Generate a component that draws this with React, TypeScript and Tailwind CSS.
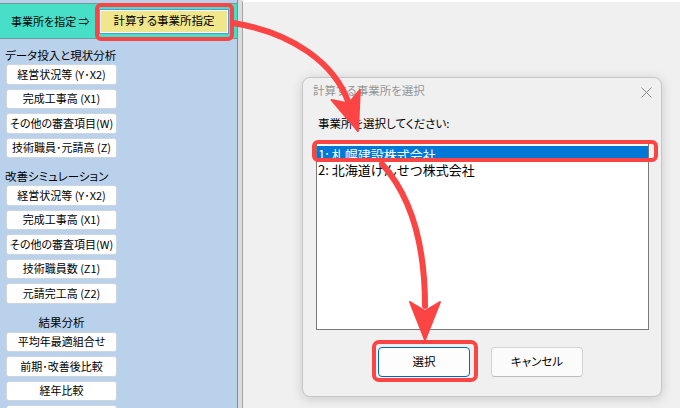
import * as React from "react"

const inputButtons = [
  "経営状況等 (Y･X2)",
  "完成工事高 (X1)",
  "その他の審査項目(W)",
  "技術職員･元請高 (Z)",
]

const simulationButtons = [
  "経営状況等 (Y･X2)",
  "完成工事高 (X1)",
  "その他の審査項目(W)",
  "技術職員数 (Z1)",
  "元請完工高 (Z2)",
]

const resultButtons = ["平均年最適組合せ", "前期･改善後比較", "経年比較", "年度別比較"]

const companies = ["1: 札幌建設株式会社", "2: 北海道けんせつ株式会社"]

const SideButton = ({ label }: { label: string }) => (
  <button className="ml-[6px] flex h-[20.5px] w-[111px] shrink-0 items-center justify-center rounded-[3px] border border-[#cdd5de] bg-white text-[11px] leading-none text-black">
    {label}
  </button>
)

const Sidebar = () => (
  <aside className="flex h-full w-[238px] shrink-0 flex-col border-r border-[#7f8d9c] bg-[#b9d1ea]">
    {/* header */}
    <div className="mt-[3px] flex h-[36px] shrink-0 items-center border-y border-[#6f9a96] bg-[#48dfc9] pl-[11px]">
      <span className="w-[88px] text-[11px] leading-none text-black">事業所を指定&nbsp;⇒</span>
      <button className="flex h-[25px] w-[130px] items-center justify-center border border-[#4f9be0] bg-[#f0e68c] text-[11.5px] leading-none text-black shadow-[inset_0_0_0_1px_#fff]">
        計算する事業所指定
      </button>
    </div>

    <div className="mt-[8px] flex h-[17px] items-center pl-[5px] text-[11.5px] text-black">データ投入と現状分析</div>
    <div className="flex flex-col gap-[4px]">
      {inputButtons.map((b, i) => (
        <SideButton key={i} label={b} />
      ))}
    </div>

    <div className="mt-[10px] flex h-[17px] items-center pl-[5px] text-[11.5px] text-black">改善シミュレーション</div>
    <div className="flex flex-col gap-[4px]">
      {simulationButtons.map((b, i) => (
        <SideButton key={i} label={b} />
      ))}
    </div>

    <div className="mt-[11px] flex h-[17px] w-[123px] items-center justify-center text-[11.5px] text-black">結果分析</div>
    <div className="flex flex-col gap-[4px]">
      {resultButtons.map((b, i) => (
        <SideButton key={i} label={b} />
      ))}
    </div>
  </aside>
)

const SelectDialog = () => (
  <div className="absolute left-[302px] top-[77px] flex h-[320px] w-[360px] flex-col rounded-[8px] border border-[#c6c6c6] bg-[#f0f0f0] shadow-[0_2px_12px_rgba(0,0,0,0.16)]">
    <div className="flex h-[26px] items-center justify-between pl-[10px] pr-[9px]">
      <span className="text-[11.5px] leading-none text-[#959595]">計算する事業所を選択</span>
      <svg width="11" height="11" viewBox="0 0 11 11" className="mt-[3px]">
        <path d="M0.5 0.5L10.5 10.5M10.5 0.5L0.5 10.5" stroke="#8a8a8a" strokeWidth="1" />
      </svg>
    </div>

    <div className="mt-[12px] flex h-[16px] items-center pl-[15px] text-[11.5px] leading-none text-black">
      事業所を選択してください:
    </div>

    <div className="ml-[13px] mt-[10px] h-[188px] w-[333px] border border-[#7a7a7a] bg-white pt-[3px] [font-feature-settings:normal]">
      {companies.map((c, i) => (
        <div
          key={c}
          className={
            i === 0
              ? "flex h-[16px] items-center bg-[#0078d7] pl-[1px] text-[13px] leading-[13px] text-white"
              : "flex h-[15px] items-center pl-[1px] text-[13px] leading-[13px] text-black"
          }
        >
          {c}
        </div>
      ))}
    </div>

    <div className="mt-[17px] flex gap-[21px] pl-[75px]">
      <button className="flex h-[30px] w-[92px] items-center justify-center rounded-[4px] border border-[#0067c0] bg-[#fdfdfd] text-[11.5px] leading-none text-black">
        選択
      </button>
      <button className="flex h-[30px] w-[92px] items-center justify-center rounded-[4px] border border-[#d3d3d3] border-b-[#bdbdbd] bg-[#fbfbfb] text-[11.5px] leading-none text-black">
        キャンセル
      </button>
    </div>
  </div>
)

const Arrows = () => (
  <svg className="pointer-events-none absolute inset-0" width="680" height="408" viewBox="0 0 680 408">
    <g stroke="#fb4444" fill="none" strokeWidth="6" strokeLinecap="round">
      <path d="M233 23 C 290 32, 335 62, 349 104" />
      <path d="M382 164 C 410 195, 425 240, 425 306" />
    </g>
    <g fill="#fb4444" stroke="#fb4444" strokeWidth="2" strokeLinejoin="round">
      <path d="M0 0 L-15 -38 L0 -29 L15 -38 Z" transform="translate(358 131) rotate(-19)" />
      <path d="M425 340 L410 302 L425 311 L440 302 Z" />
    </g>
  </svg>
)

export default function App() {
  return (
    <div className="relative flex h-[408px] w-[680px] overflow-hidden bg-[#f0f0f0] font-['Noto_Sans_CJK_JP','Noto_Sans',sans-serif] [font-feature-settings:'palt']">
      <Sidebar />

      {/* main area */}
      <div className="flex flex-1 bg-[#dcdcdc] pl-[4px]">
        <div className="flex-1 border-l border-t-2 border-l-[#a3a3a3] border-t-white bg-[#f0f0f0]" />
      </div>

      <SelectDialog />

      {/* highlight boxes */}
      <div className="absolute left-[95px] top-[3px] h-[38px] w-[139px] rounded-[6px] border-4 border-[#fb4444]" />
      <div className="absolute left-[312px] top-[140px] h-[22px] w-[346px] rounded-[6px] border-4 border-[#fb4444]" />
      <div className="absolute left-[372px] top-[340px] h-[42px] w-[106px] rounded-[7px] border-4 border-[#fb4444]" />

      <Arrows />
    </div>
  )
}
